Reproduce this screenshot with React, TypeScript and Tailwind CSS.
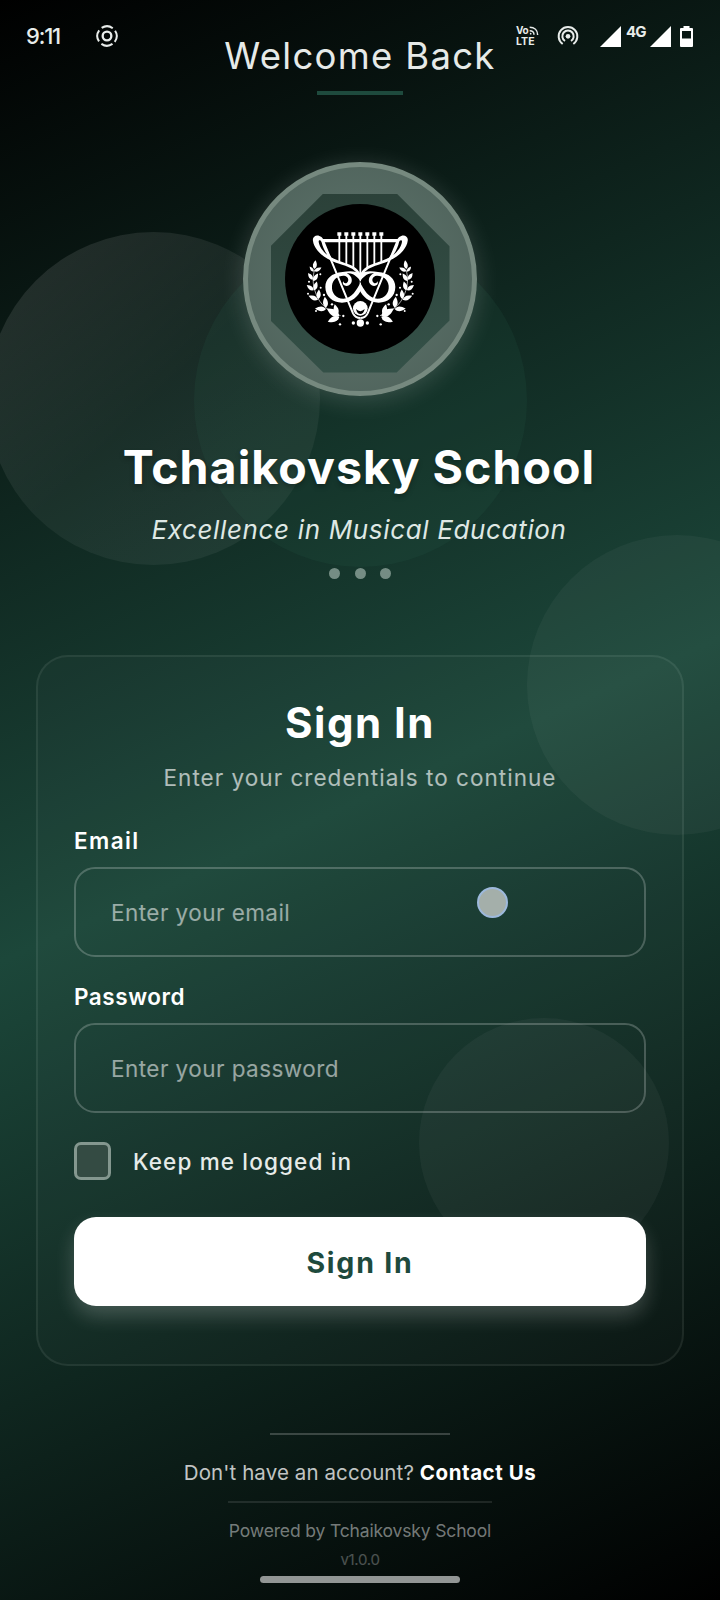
import type { ReactNode } from "react";

function StatusBar() {
  return (
    <div className="absolute inset-x-0 top-0 z-10 flex h-[72px] items-center pl-[26px] pr-[27px] text-[#e8ecea]">
      <span className="w-[36px] text-[22px] font-medium leading-none tracking-[-1.2px]">9:11</span>
      <svg className="ml-[34px]" width="22" height="22" viewBox="0 0 66 66" fill="none" stroke="currentColor">
        <circle cx="33" cy="33" r="13" strokeWidth="7" />
        <circle cx="33" cy="33" r="29" strokeWidth="6" strokeDasharray="35 10.55" strokeDashoffset="-5.3" transform="rotate(45 33 33)" />
      </svg>
      <div className="ml-auto flex items-center">
        <div className="relative h-[24px] w-[24px] font-bold">
          <span className="block pt-[1px] text-[10px] leading-[11px] tracking-[-0.3px]">Vo</span>
          <span className="block text-[10.500px] leading-[12px] tracking-[0.100px]">LTE</span>
          <svg className="absolute left-[13px] top-[2px]" width="10" height="10" viewBox="0 0 30 30" fill="none" stroke="currentColor" strokeWidth="4.500">
            <path d="M2 4c14 0 24 9 24 23M2 14c8 0 13 5 13 12" />
            <circle cx="5" cy="23" r="2.500" fill="currentColor" stroke="none" />
          </svg>
        </div>
        <svg className="ml-[17px]" width="22" height="22" viewBox="0 0 66 66" fill="none" stroke="currentColor" strokeWidth="6">
          <circle cx="33" cy="34" r="7" fill="currentColor" stroke="none" />
          <path d="M17 57A28 28 0 1 1 49 57" />
          <path d="M24 48A17 17 0 1 1 42 48" />
        </svg>
        <svg className="ml-[21px]" width="21" height="21" viewBox="0 0 21 21" fill="#fff">
          <path d="M21 0V21H0Z" />
        </svg>
        <span className="mb-[9px] ml-[5px] w-[20px] text-[15px] font-bold leading-none tracking-[-0.8px]">4G</span>
        <svg className="ml-[4px]" width="21" height="21" viewBox="0 0 21 21" fill="#fff">
          <path d="M21 0V21H0Z" />
        </svg>
        <svg className="ml-[9px]" width="13" height="21" viewBox="0 0 13 21" fill="#fff" fillRule="evenodd">
          <path d="M3.500 0h6v2H12a1 1 0 0 1 1 1v17a1 1 0 0 1-1 1H1a1 1 0 0 1-1-1V3a1 1 0 0 1 1-1h2.500zM2 5v7.500h9V5z" />
        </svg>
      </div>
    </div>
  );
}

function Leaf({ x, y, a, s = 1 }: { x: number; y: number; a: number; s?: number }) {
  return <path d="M0 0C-6 -5 -7 -12 0 -22C7 -12 6 -5 0 0Z" transform={`translate(${x} ${y}) rotate(${a}) scale(${s})`} />;
}

function HalfEmblem() {
  return (
    <g>
      <path
        d="M69 92C66 80 78 73 88 77C98 80 101 88 102 96C107 118 119 138 138 156C114 149 96 137 83 121C74 110 70 101 69 92ZM86 94C88 108 98 122 112 134C102 120 97 106 95 96C93 88 86 88 86 94Z"
        fillRule="evenodd"
      />
      <path d="M98 88L189 309Q196 323 211 323" fill="none" stroke="#fff" strokeWidth="6" />
      <path d="M124 146C156 164 196 162 209 196" fill="none" stroke="#fff" strokeWidth="8" />
      <path
        d="M213 194C200 180 178 181 158 185C124 188 106 206 106 230C106 258 128 277 156 277C186 277 204 258 213 240V214C200 238 186 264 160 265C138 265 124 248 126 226C128 206 146 195 162 196C174 197 179 210 171 217C166 221 161 218 160 213C154 222 166 231 177 225C191 217 187 196 170 189C190 186 202 200 213 214Z"
      />
      <path d="M74 178C66 204 68 232 84 264C98 290 122 306 152 316" fill="none" stroke="#fff" strokeWidth="2" />
      <Leaf x={73} y={176} a={8} s={1.2} />
      <Leaf x={71} y={184} a={-38} s={0.9} />
      <Leaf x={73} y={183} a={62} s={1.1} />
      <Leaf x={68} y={208} a={-34} s={1.1} />
      <Leaf x={70} y={212} a={32} s={1.2} />
      <Leaf x={71} y={240} a={-52} s={1.2} />
      <Leaf x={73} y={240} a={16} s={1.25} />
      <Leaf x={84} y={268} a={-68} s={1.4} />
      <Leaf x={85} y={266} a={4} s={1.3} />
      <Leaf x={108} y={296} a={-88} s={1.5} />
      <Leaf x={108} y={292} a={-6} s={1.5} />
      <Leaf x={148} y={318} a={-58} s={2} />
      <Leaf x={142} y={314} a={-14} s={1.5} />
      <Leaf x={148} y={320} a={-112} s={1.7} />
      <circle cx="91" cy="192" r="3" />
      <circle cx="57" cy="214" r="3" />
      <circle cx="92" cy="232" r="3" />
      <circle cx="54" cy="250" r="3" />
      <circle cx="102" cy="254" r="3.500" />
      <circle cx="126" cy="282" r="3.500" />
      <circle cx="78" cy="302" r="3" />
      <circle cx="160" cy="317" r="3.500" />
      <circle cx="150" cy="342" r="3.500" />
      <circle cx="190" cy="338" r="5" />
    </g>
  );
}

function Emblem() {
  return (
    <svg width="150" height="150" viewBox="-15 -19 450 450" fill="#fff">
      <HalfEmblem />
      <g transform="translate(422 0) scale(-1 1)">
        <HalfEmblem />
      </g>
      <path d="M95 91H327" stroke="#fff" strokeWidth="10" />
      <path d="M148 72V154M169 72V164M190 72V174M211 72V197M232 72V174M253 72V164M274 72V154" stroke="#fff" strokeWidth="5.500" />
      <path d="M142 66h12v10h-12zM163 66h12v10h-12zM184 66h12v10h-12zM205 66h12v10h-12zM226 66h12v10h-12zM247 66h12v10h-12zM268 66h12v10h-12z" />
      <circle cx="211" cy="294" r="22" />
      <path d="M198 296Q211 309 224 296Q221 311 211 311Q201 311 198 296Z" fill="#000" />
      <circle cx="211" cy="338" r="11" />
    </svg>
  );
}

function Field({ label, labelClass, children }: { label: string; labelClass: string; children: ReactNode }) {
  return (
    <label className="block">
      <span className={`block text-[22.500px] font-semibold leading-7 text-white ${labelClass}`}>{label}</span>
      {children}
    </label>
  );
}

const inputClass =
  "block h-[90px] w-full rounded-[21px] border-2 border-white/22 bg-transparent pl-[35px] text-[22.500px] font-normal tracking-[0.450px] text-white outline-none placeholder:text-white/55";

export default function App() {
  return (
    <main className="relative flex h-[1600px] w-[720px] flex-col items-center overflow-hidden bg-[linear-gradient(155.77deg,#000000_0%,#1c473a_50%,#000000_100%)] font-['Inter',sans-serif]">
      <div className="absolute left-[-13px] top-[232px] size-[333px] rounded-full bg-[linear-gradient(135deg,rgba(255,255,255,0.12),rgba(255,255,255,0.05)_50%,rgba(255,255,255,0.06))]" />
      <div className="absolute left-[194px] top-[234px] size-[333px] rounded-full bg-[#2c6a58]/13" />
      <div className="absolute left-[527px] top-[535px] size-[300px] rounded-full bg-white/4" />
      <div className="absolute left-[419px] top-[1018px] size-[250px] rounded-full bg-white/4" />
      <StatusBar />

      <h1 className="relative mt-8 whitespace-nowrap text-[36.500px] font-normal leading-[48px] tracking-[1.300px] text-[#e6eae8]">Welcome Back</h1>
      <div className="relative mt-[11px] h-1 w-[86px] bg-[#1e4a3d]" />

      <div className="relative mt-[67px] flex size-[234px] shrink-0 items-center justify-center rounded-full border-[5px] border-[#76897f] bg-[radial-gradient(circle,#566b63_50%,#4c5f58_100%)] shadow-[0_4px_24px_rgba(255,255,255,0.17)]">
        <div className="mt-2 flex size-[179px] shrink-0 items-center justify-center bg-[linear-gradient(170deg,#2b4038,#355249)] [clip-path:polygon(29.500%_0,70.500%_0,100%_29.500%,100%_71%,70.500%_100%,29.500%_100%,0_71%,0_29.500%)]">
          <div className="mb-2 size-[150px] rounded-full bg-black">
            <Emblem />
          </div>
        </div>
      </div>

      <h2 className="relative mt-[43px] mr-[2px] whitespace-nowrap text-[46.500px] font-bold leading-[56px] tracking-[1.050px] text-white [text-shadow:0_3px_5px_rgba(0,0,0,0.25)]">Tchaikovsky School</h2>
      <p className="relative mt-[19px] mr-[2px] whitespace-nowrap text-[26px] italic leading-8 tracking-[0.650px] text-[#dfe8e4]">Excellence in Musical Education</p>
      <div className="relative mt-[22px] flex gap-[14.500px]">
        <i className="size-[11px] rounded-full bg-[#758d84]" />
        <i className="size-[11px] rounded-full bg-[#758d84]" />
        <i className="size-[11px] rounded-full bg-[#758d84]" />
      </div>

      <section className="relative mt-[76px] h-[711px] w-[648px] shrink-0 rounded-[32px] border-2 border-white/7 bg-white/2 px-[36px] pt-[42px]">
        <h3 className="text-center text-[42px] font-bold leading-[48px] tracking-[1.500px] text-white">Sign In</h3>
        <p className="mt-[17px] whitespace-nowrap text-center text-[22.500px] leading-7 tracking-[1.020px] text-white/65">Enter your credentials to continue</p>
        <div className="mt-[35px]">
          <Field label="Email" labelClass="tracking-[1.400px] mb-3">
            <input className={inputClass} placeholder="Enter your email" />
          </Field>
        </div>
        <div className="mt-[26px]">
          <Field label="Password" labelClass="tracking-[0.550px] mb-3">
            <input className={inputClass} type="password" placeholder="Enter your password" />
          </Field>
        </div>
        <div className="mt-[29px] flex h-[38px] items-center">
          <span className="h-[38px] w-[37px] rounded-[7px] border-[3px] border-[#84978f] bg-[#344b43]" />
          <span className="ml-[22px] mt-[2px] whitespace-nowrap text-[22.500px] font-medium leading-7 tracking-[1.150px] text-[#e6ebe9]">Keep me logged in</span>
        </div>
        <button className="mt-[37px] flex h-[89px] w-full items-center justify-center rounded-[22px] bg-white pt-1 text-[28.500px] font-bold tracking-[1.800px] text-[#1e4a3d] shadow-[0_10px_20px_rgba(255,255,255,0.2)]">
          Sign In
        </button>
        <div className="absolute left-[439px] top-[230px] size-[31px] rounded-full border-2 border-[#9db9dc] bg-[#a4afaa]" />
      </section>

      <div className="relative mt-[67px] h-[2px] w-[180px] bg-white/20" />
      <p className="relative mt-[24px] whitespace-nowrap text-[20.500px] leading-7 tracking-[0.100px] text-white/75">
        Don't have an account? <b className="font-bold tracking-[0.550px] text-white">Contact Us</b>
      </p>
      <div className="relative mt-[14px] h-[2px] w-[264px] bg-white/10" />
      <p className="relative mt-[16px] whitespace-nowrap text-[17.500px] leading-6 tracking-[-0.150px] text-white/45">Powered by Tchaikovsky School</p>
      <p className="relative mt-[7px] text-[15px] leading-5 tracking-[-0.300px] text-white/28">v1.0.0</p>
      <div className="relative mt-[6px] h-[7px] w-[200px] rounded-full bg-[#929695]" />
    </main>
  );
}
